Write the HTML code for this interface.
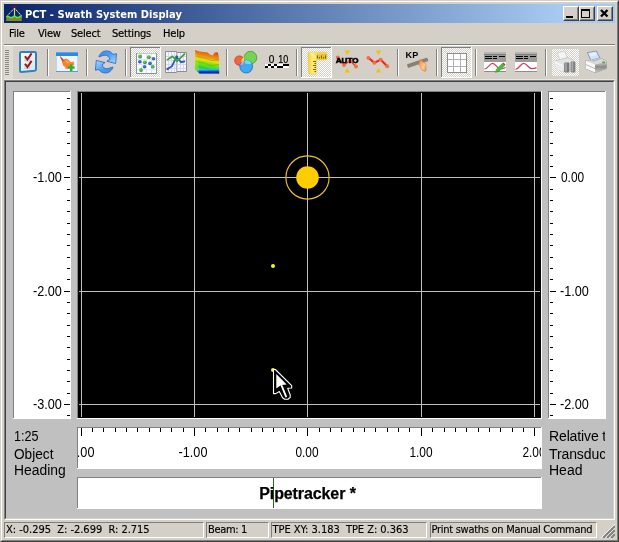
<!DOCTYPE html>
<html>
<head>
<meta charset="utf-8">
<title>PCT - Swath System Display</title>
<style>
html,body{margin:0;padding:0;}
body{width:619px;height:542px;overflow:hidden;background:#d4d0c8;position:relative;font-family:"Liberation Sans",sans-serif;font-size:11px;color:#000;}
#win *{position:absolute;box-sizing:border-box;}
#win svg *{position:static;}
#win{position:absolute;left:0;top:0;width:619px;height:542px;background:#d4d0c8;overflow:hidden;will-change:transform;}
.frame-o{left:0;top:0;width:619px;height:542px;border:1px solid;border-color:#d4d0c8 #404040 #404040 #d4d0c8;}
.frame-i{left:1px;top:1px;width:617px;height:540px;border:1px solid;border-color:#fff #808080 #808080 #fff;}
#title{left:4px;top:4px;width:611px;height:19px;background:linear-gradient(to right,#0a246a 0%,#a6caf0 91%,#a6caf0 100%);}
#title .cap{left:21px;top:4px;color:#fff;font-weight:bold;font-size:11px;line-height:14px;white-space:nowrap;letter-spacing:0.04px;font-family:"DejaVu Sans Condensed","Liberation Sans",sans-serif;}
.tbtn{top:2px;width:16px;height:15px;background:#d4d0c8;border:1px solid;border-color:#fff #404040 #404040 #fff;}
.tbtn:before{content:"";position:absolute;left:0;top:0;right:0;bottom:0;border:1px solid;border-color:#d4d0c8 #808080 #808080 #d4d0c8;}
#menu{left:4px;top:23px;width:611px;height:20px;}
#menu span{top:4px;font-size:11px;line-height:13px;white-space:nowrap;font-family:"DejaVu Sans Condensed","Liberation Sans",sans-serif;letter-spacing:-0.2px;-webkit-text-stroke:0.2px #000;}
#tb{left:4px;top:44px;width:611px;height:37px;}
.sep{top:5px;width:2px;height:26px;border-left:1px solid #808080;border-right:1px solid #fff;}
#client{left:4px;top:80px;width:611px;height:440px;border:1px solid;border-color:#808080 #fff #fff #808080;background:#c0c0c0;}
#client .in{left:0;top:0;width:609px;height:438px;border:1px solid;border-color:#404040 #d4d0c8 #d4d0c8 #404040;}
.lbl{font-size:14px;line-height:16px;white-space:nowrap;transform-origin:0 50%;}
.num{font-size:14px;line-height:16px;white-space:nowrap;transform:scaleX(0.905);}
.sp{top:522px;height:16px;border:1px solid;border-color:#808080 #fff #fff #808080;font-size:11px;line-height:14px;padding-left:1px;white-space:nowrap;overflow:hidden;font-family:"DejaVu Sans Condensed","Liberation Sans",sans-serif;-webkit-text-stroke:0.15px #000;}
</style>
</head>
<body>
<div id="win">
<div class="frame-o"></div>
<div class="frame-i"></div>

<div id="title">
  <svg style="left:2px;top:1px" width="16" height="16" viewBox="0 0 16 16">
    <ellipse cx="8.5" cy="1.6" rx="3.3" ry="1.4" fill="#6a104e" opacity="0.85"/>
    <path d="M0.2 16 V12.6 L2.2 11.6 L4.5 12.8 L6.5 12.6 L8.5 11.2 L10.5 12.6 L12.5 12.8 L14 11.6 L15.8 11.8 V16 Z" fill="#86861c"/>
    <path d="M8.5 3.2 L0.5 11.4 M8.5 3.2 L15.6 10.9" fill="none" stroke="#f6f6c0" stroke-width="1" stroke-dasharray="1.5 0.7"/>
    <path d="M8.5 3.4 V11.4" stroke="#e4e43c" stroke-width="1.1"/>
    <path d="M0.3 12 L2.2 11.3 L4.5 12.6 L6.4 12.4 L8.5 10.8 L10.6 12.4 L12.5 12.6 L14 11.3 L15.7 11.6" fill="none" stroke="#4ce84c" stroke-width="1.5" stroke-linejoin="round"/>
  </svg>
  <div class="cap">PCT - Swath System Display</div>
  <div class="tbtn" style="left:559px"><svg width="14" height="13" style="left:0;top:0" shape-rendering="crispEdges"><rect x="2" y="9" width="7" height="2" fill="#000"/></svg></div>
  <div class="tbtn" style="left:575px"><svg width="14" height="13" style="left:0;top:0" shape-rendering="crispEdges"><rect x="1.5" y="2.5" width="8" height="8" fill="none" stroke="#000"/><rect x="1" y="2" width="9" height="2" fill="#000"/></svg></div>
  <div class="tbtn" style="left:593px"><svg width="14" height="13" style="left:0;top:0"><path d="M3 3 L9.5 9.5 M9.5 3 L3 9.5" stroke="#000" stroke-width="2.3"/></svg></div>
</div>

<div id="menu">
  <span style="left:5px">File</span>
  <span style="left:34px">View</span>
  <span style="left:67px">Select</span>
  <span style="left:108px">Settings</span>
  <span style="left:159px">Help</span>
</div>

<div id="tb">
<svg id="tbsvg" style="left:-4px;top:0" width="619" height="37" viewBox="0 44 619 37">
<defs>
  <pattern id="chk" x="0" y="0" width="2" height="2" patternUnits="userSpaceOnUse">
    <rect x="0" y="0" width="2" height="2" fill="#d4d0c8"/>
    <rect x="0" y="0" width="1" height="1" fill="#fff"/>
    <rect x="1" y="1" width="1" height="1" fill="#fff"/>
  </pattern>
  <linearGradient id="gBlue" x1="0" y1="0" x2="1" y2="1">
    <stop offset="0" stop-color="#b8dcff"/><stop offset="1" stop-color="#2f86e6"/>
  </linearGradient>
  <linearGradient id="gBlue2" x1="0" y1="0" x2="0" y2="1">
    <stop offset="0" stop-color="#2f86e6"/><stop offset="1" stop-color="#a8d4fc"/>
  </linearGradient>
  <linearGradient id="gPage" x1="0" y1="0" x2="1" y2="1">
    <stop offset="0" stop-color="#ffffff"/><stop offset="1" stop-color="#cfe6fb"/>
  </linearGradient>
  <linearGradient id="gTerr" x1="0.2" y1="0" x2="0" y2="1">
    <stop offset="0" stop-color="#c8580c"/>
    <stop offset="0.12" stop-color="#e87410"/>
    <stop offset="0.26" stop-color="#f09c10"/>
    <stop offset="0.36" stop-color="#e8e010"/>
    <stop offset="0.48" stop-color="#90e010"/>
    <stop offset="0.7" stop-color="#38dc20"/>
    <stop offset="0.85" stop-color="#28d850"/>
    <stop offset="1" stop-color="#20c8e0"/>
  </linearGradient>
  <linearGradient id="gTerrB" gradientUnits="userSpaceOnUse" x1="0" y1="66.5" x2="0" y2="73.6">
    <stop offset="0" stop-color="#20d0e0" stop-opacity="0"/>
    <stop offset="0.45" stop-color="#20c8e8" stop-opacity="0.9"/>
    <stop offset="0.72" stop-color="#1038e0"/>
    <stop offset="1" stop-color="#0808a8"/>
  </linearGradient>
  <linearGradient id="gRul" x1="0" y1="0" x2="1" y2="0">
    <stop offset="0" stop-color="#f6cc38"/><stop offset="0.25" stop-color="#fff078"/><stop offset="0.45" stop-color="#f8dc58"/><stop offset="1" stop-color="#f4cc38"/>
  </linearGradient>
  <linearGradient id="gHand" x1="0" y1="0" x2="1" y2="1">
    <stop offset="0" stop-color="#f07848"/><stop offset="0.6" stop-color="#ffd088"/><stop offset="1" stop-color="#f08850"/>
  </linearGradient>
  <linearGradient id="gPrn" x1="0" y1="0" x2="0" y2="1">
    <stop offset="0" stop-color="#e8e8e8"/><stop offset="0.5" stop-color="#888"/><stop offset="1" stop-color="#c8c8c8"/>
  </linearGradient>
  <linearGradient id="gRefA" x1="0" y1="0" x2="1" y2="1">
    <stop offset="0" stop-color="#3a8cec"/><stop offset="0.45" stop-color="#4a9cf2"/><stop offset="1" stop-color="#b4dcff"/>
  </linearGradient>
  <radialGradient id="gBallG" cx="0.4" cy="0.35" r="0.7">
    <stop offset="0" stop-color="#6ad05a"/><stop offset="0.6" stop-color="#3cae3c"/><stop offset="1" stop-color="#2a8a30"/>
  </radialGradient>
  <radialGradient id="gBallB" cx="0.4" cy="0.35" r="0.7">
    <stop offset="0" stop-color="#4a86e0"/><stop offset="0.6" stop-color="#2a60c0"/><stop offset="1" stop-color="#1c4a9a"/>
  </radialGradient>
</defs>
<g shape-rendering="crispEdges">
  <!-- top etched line -->
  <rect x="4" y="44" width="611" height="1" fill="#808080"/>
  <rect x="4" y="45" width="611" height="1" fill="#fff"/>
  <rect x="4" y="46" width="9" height="33" fill="#dedbd4"/>
  <rect x="4" y="79" width="611" height="1" fill="#e8e6e0"/>
  <!-- gripper -->
  <g fill="#8a8780">
    <rect x="5" y="50" width="4" height="1"/><rect x="5" y="52" width="4" height="1"/><rect x="5" y="54" width="4" height="1"/>
    <rect x="5" y="56" width="4" height="1"/><rect x="5" y="58" width="4" height="1"/><rect x="5" y="60" width="4" height="1"/>
    <rect x="5" y="62" width="4" height="1"/><rect x="5" y="64" width="4" height="1"/><rect x="5" y="66" width="4" height="1"/>
    <rect x="5" y="68" width="4" height="1"/><rect x="5" y="70" width="4" height="1"/><rect x="5" y="72" width="4" height="1"/>
    <rect x="5" y="74" width="4" height="1"/>
  </g>
  <!-- separators -->
  <g id="seps">
    <rect x="47" y="49" width="1" height="27" fill="#808080"/><rect x="48" y="49" width="1" height="27" fill="#fff"/>
    <rect x="86" y="49" width="1" height="27" fill="#808080"/><rect x="87" y="49" width="1" height="27" fill="#fff"/>
    <rect x="125" y="49" width="1" height="27" fill="#808080"/><rect x="126" y="49" width="1" height="27" fill="#fff"/>
    <rect x="226" y="49" width="1" height="27" fill="#808080"/><rect x="227" y="49" width="1" height="27" fill="#fff"/>
    <rect x="296" y="49" width="1" height="27" fill="#808080"/><rect x="297" y="49" width="1" height="27" fill="#fff"/>
    <rect x="397" y="49" width="1" height="27" fill="#808080"/><rect x="398" y="49" width="1" height="27" fill="#fff"/>
    <rect x="436" y="49" width="1" height="27" fill="#808080"/><rect x="437" y="49" width="1" height="27" fill="#fff"/>
    <rect x="475" y="49" width="1" height="27" fill="#808080"/><rect x="476" y="49" width="1" height="27" fill="#fff"/>
    <rect x="545" y="49" width="1" height="27" fill="#808080"/><rect x="546" y="49" width="1" height="27" fill="#fff"/>
  </g>
  <!-- pressed buttons -->
  <g id="pressed">
    <rect x="130" y="47" width="31" height="31" fill="#fff"/><rect x="130" y="47" width="30" height="30" fill="#808080"/><rect x="131" y="48" width="29" height="29" fill="url(#chk)"/>
    <rect x="301" y="47" width="31" height="31" fill="#fff"/><rect x="301" y="47" width="30" height="30" fill="#808080"/><rect x="302" y="48" width="29" height="29" fill="url(#chk)"/>
    <rect x="441" y="47" width="31" height="31" fill="#fff"/><rect x="441" y="47" width="30" height="30" fill="#808080"/><rect x="442" y="48" width="29" height="29" fill="url(#chk)"/>
    <rect x="552" y="49" width="27" height="27" fill="url(#chk)"/>
  </g>
</g>
<!-- 1: checklist -->
<g>
  <path d="M21.5 52 H34.5 Q36 52 36 53.5 V69.2 Q36 70.6 34.5 70.8 L21.5 72 Q20 72 20 70.5 V53.5 Q20 52 21.5 52 Z" fill="url(#gPage)" stroke="#2f80c6" stroke-width="2" stroke-linejoin="round"/>
  <rect x="25" y="57" width="4.5" height="4" fill="#eee" stroke="#bdbdbd" stroke-width="0.8"/>
  <rect x="25" y="64.5" width="4.5" height="4" fill="#eee" stroke="#bdbdbd" stroke-width="0.8"/>
  <path d="M25 56.2 L27.4 59.6 L31.6 53.4" fill="none" stroke="#a81212" stroke-width="1.9"/>
  <path d="M25 63.7 L27.4 67.1 L31.6 60.9" fill="none" stroke="#a81212" stroke-width="1.9"/>
</g>
<!-- 2: window + arrow + plus -->
<g>
  <rect x="56" y="52" width="22" height="20" fill="#f3f3ff"/>
  <rect x="56" y="52" width="22" height="4" fill="#2a8be6"/>
  <rect x="56" y="52" width="22" height="1" fill="#58a6ee"/>
  <rect x="56" y="71" width="22" height="1" fill="#4aa0f0"/>
  <rect x="56" y="56" width="1" height="15" fill="#b8d8fa"/>
  <rect x="77" y="56" width="1" height="15" fill="#b8d8fa"/>
  <path d="M60 56.3 L63.6 59.8 L65.6 59 L67.9 59.6 L70.6 62.6 L73.6 61.9 L73.9 64.8 L71 66 L69.9 66.8 L67.9 68.6 L65.4 68.4 L65.9 66.7 L63.8 66 L62.9 63.9 L62.2 60.8 Z" fill="#f58428" stroke="#ea6c18" stroke-width="0.5" stroke-linejoin="round"/>
  <path d="M60 56.3 L63.6 59.8 L63 62.6 L62.2 60.8 Z" fill="#b04c20"/>
  <path d="M65 60.4 L67.6 60.6 L69.6 63 L67 63.6 Z" fill="#fbb060" opacity="0.8"/>
  <path d="M71.2 64.2 V71 M67.8 67.6 H74.6" stroke="#30b030" stroke-width="2.5" fill="none"/>
</g>
<!-- 3: refresh -->
<g stroke="#2262c8" stroke-width="0.8" stroke-linejoin="round">
  <path d="M98.9 56.9 C99.8 53.4 103 50.9 106.6 50.9 C109.4 50.9 111.6 52.2 113 54.4 L116.5 53.7 L115.6 63.5 L106.8 61.3 L109.8 59.1 C108.9 56.6 107.4 55.2 105.5 55.2 C103.3 55.2 101.3 56.2 98.9 56.9 Z" fill="url(#gRefA)"/>
  <path d="M98.9 56.9 C99.8 53.4 103 50.9 106.6 50.9 C109.4 50.9 111.6 52.2 113 54.4 L116.5 53.7 L115.6 63.5 L106.8 61.3 L109.8 59.1 C108.9 56.6 107.4 55.2 105.5 55.2 C103.3 55.2 101.3 56.2 98.9 56.9 Z" fill="url(#gRefA)" transform="rotate(180 105.95 61.95)"/>
</g>
<!-- 4: scatter (pressed) -->
<g>
  <rect x="136.5" y="53.5" width="20" height="20" fill="#fdfdff" stroke="#8e929c" stroke-width="1"/>
  <rect x="137" y="53" width="19" height="1" fill="#c4c8d2"/>
  <path d="M141.5 54 V73 M146.5 54 V73 M151.5 54 V73 M137 59.5 H156 M137 64.5 H156 M137 69.5 H156" stroke="#e4e4f2" stroke-width="1" fill="none"/>
  <g fill="url(#gBallG)">
    <circle cx="140" cy="56.5" r="1.9"/><circle cx="148.8" cy="57.2" r="1.9"/><circle cx="144.8" cy="62.3" r="1.9"/><circle cx="152.7" cy="66.7" r="1.9"/><circle cx="141" cy="70" r="1.9"/>
  </g>
  <g fill="url(#gBallB)">
    <circle cx="153.5" cy="58.8" r="1.8"/><circle cx="139.8" cy="61.7" r="1.8"/><circle cx="150" cy="63.4" r="1.8"/><circle cx="144.5" cy="66.7" r="1.8"/>
  </g>
</g>
<!-- 5: chart -->
<g>
  <path d="M165.5 51.5 H176.5 V52.5 H186.5 V71.5 H176.5 V72.5 H165.5 Z" fill="#f5f5fe" stroke="#8c8c98" stroke-width="1"/>
  <path d="M168.5 52 V72 M171.5 52 V72 M174.5 52 V72 M177.5 53 V71 M180.5 53 V71 M183.5 53 V71 M166 56.5 H186 M166 60.5 H186 M166 64.5 H186 M166 68.5 H186" stroke="#d4d4ea" stroke-width="1" fill="none"/>
  <path d="M176.5 53 V72" stroke="#b4b4c8" stroke-width="1" fill="none"/>
  <path d="M167.5 69 L172 66.2 L174.5 61 L176.6 57 L181 62.2 L185 61.4" fill="none" stroke="#2a58b4" stroke-width="1.7"/>
  <circle cx="176.7" cy="57" r="1.4" fill="#2a58b4"/><circle cx="167.6" cy="69" r="1.2" fill="#2a58b4"/>
  <path d="M167 60 L172.5 56.4 L177 61.2 L185 53.6" fill="none" stroke="#36a636" stroke-width="1.7"/>
</g>
<!-- 6: terrain -->
<g>
  <path d="M195 50 L199.5 51.4 L207.5 52.6 L210 54.6 L212.6 55.4 L214.8 52.6 L217.8 52.2 L218.8 56.5 L219.2 73.6 L199.4 73.6 L195.2 69.4 Z" fill="url(#gTerr)"/>
  <path d="M197.5 66 L219.2 68.5 L219.2 73.6 L199.4 73.6 L197.5 71.5 Z" fill="url(#gTerrB)"/>
  <path d="M195 50 L195.2 69.4 L199.4 73.6 L198.6 66 L197 56 Z" fill="#f4e040" opacity="0.3"/>
  <path d="M196 56.4 L205 58.4 L212 60.8 L219 59.4 M196 61.4 L204 63 L211 65.6 L219 64.4 M198 66.6 L206 68.4 L213 70.6 L219 69.8" stroke="#187818" stroke-opacity="0.3" stroke-width="0.8" fill="none"/>
</g>
<!-- 7: venn -->
<g stroke-width="0.8">
  <circle cx="239.4" cy="60.6" r="4.7" fill="#f2643e" stroke="#c4381e"/>
  <circle cx="250.5" cy="57.6" r="6.3" fill="#74d254" stroke="#3e9e2e"/>
  <circle cx="246.2" cy="66.6" r="6.4" fill="#42a8f2" stroke="#1e6cc0"/>
  <path d="M244.2 57 Q244.6 59.6 244.2 61.8 L241.6 62 Q241 58.6 244.2 57 Z" fill="#f4e020" stroke="none"/>
  <path d="M240.2 65 Q241.2 61.6 244 60.6 Q244.2 63 242.6 64.8 Z" fill="#b8a8f0" stroke="none"/>
  <path d="M244.6 60.4 Q248.6 59 251.8 63.4 Q248.4 64.6 245.2 63.6 Z" fill="#6ee0e0" stroke="none"/>
</g>
<!-- 8: 0 10 scale -->
<g>
  <text x="268.7" y="63" font-family="'Liberation Sans',sans-serif" font-size="11px" fill="#000" stroke="#000" stroke-width="0.2" textLength="5.6" lengthAdjust="spacingAndGlyphs">0</text>
  <text x="278.2" y="63" font-family="'Liberation Sans',sans-serif" font-size="11px" fill="#000" stroke="#000" stroke-width="0.2" textLength="10" lengthAdjust="spacingAndGlyphs">10</text>
  <g shape-rendering="crispEdges">
    <rect x="265" y="64" width="24" height="4" fill="#fff"/>
    <rect x="268" y="64" width="3" height="2" fill="#000"/><rect x="274" y="64" width="3" height="2" fill="#000"/><rect x="283" y="64" width="6" height="2" fill="#000"/>
    <rect x="265" y="66" width="3" height="2" fill="#000"/><rect x="271" y="66" width="3" height="2" fill="#000"/><rect x="277" y="66" width="6" height="2" fill="#000"/>
  </g>
</g>
<!-- 9: ruler (pressed) -->
<g>
  <path d="M308 52.6 Q308 52.2 308.6 52.2 H325.4 Q327.3 52.6 327.2 54.5 V58 Q327 59.8 325.4 59.8 H316.4 V72.6 Q316.2 74.2 314.8 74.2 H310 Q308.6 74 308.5 72.4 Z" fill="url(#gRul)" stroke="#e8c030" stroke-width="0.4"/>
  <path d="M308.3 52.4 L316.4 59.8 V57.4 L311 52.4 Z" fill="#fff8b0" opacity="0.55"/>
  <rect x="316.4" y="54.2" width="10.4" height="5" fill="#d8a820" opacity="0.45"/>
  <path d="M317.5 55.5 V58.5 M319.5 57 V58.5 M321.5 55.5 V58.5 M323.5 57 V58.5 M325.5 55.5 V58.5" stroke="#6a5000" stroke-width="1" fill="none" opacity="0.85"/>
  <path d="M313 61.5 H316 M314.5 63.5 H316 M313 65.5 H316 M314.5 67.5 H316 M313 69.5 H316 M314.5 71.5 H316" stroke="#6a5000" stroke-width="1" fill="none" opacity="0.85"/>
</g>
<!-- 10: AUTO -->
<g>
  <path d="M337.8 57.4 L344 65 L350 60.6 L356 66.4" stroke="#e03030" stroke-width="1.4" fill="none"/>
  <circle cx="337.8" cy="57.4" r="1.9" fill="#f86c40"/><circle cx="344" cy="65" r="1.9" fill="#f86c40"/><circle cx="350" cy="60.6" r="1.9" fill="#f86c40"/><circle cx="356" cy="66.4" r="2" fill="#f86c40"/>
  <path d="M344.5 50.6 H350.1 L347.3 55 Z" fill="#ecc410"/>
  <path d="M344.5 72.6 H350.1 L347.3 68.2 Z" fill="#ecc410"/>
  <text x="335.8" y="63.4" font-family="'Liberation Sans',sans-serif" font-size="7.4px" font-weight="bold" fill="#000" stroke="#000" stroke-width="0.55" textLength="22.6" lengthAdjust="spacingAndGlyphs">AUTO</text>
</g>
<!-- 11: zigzag -->
<g>
  <path d="M368.4 57.8 L374.4 62.8 L380.6 59.6 L387.2 66.2" stroke="#f8a888" stroke-width="3.4" stroke-opacity="0.5" fill="none" stroke-linecap="round"/>
  <path d="M368.4 57.8 L374.4 62.8 L380.6 59.6 L387.2 66.2" stroke="#e02828" stroke-width="2" fill="none"/>
  <circle cx="368.4" cy="57.8" r="1.9" fill="#f86c40"/><circle cx="374.4" cy="62.8" r="1.9" fill="#f86c40"/><circle cx="380.6" cy="59.6" r="1.9" fill="#f86c40"/><circle cx="387.2" cy="66.2" r="2" fill="#f86c40"/>
  <path d="M375.7 50.6 H381.3 L378.5 55 Z" fill="#ecc410"/>
  <path d="M375.7 72.6 H381.3 L378.5 68.2 Z" fill="#ecc410"/>
</g>
<!-- 12: KP -->
<g>
  <text x="405.6" y="57.6" font-family="'Liberation Sans',sans-serif" font-size="9px" font-weight="bold" fill="#000" textLength="12.6" lengthAdjust="spacingAndGlyphs">KP</text>
  <path d="M407.4 64.6 L427 58 L428 60.8 L408.2 67.6 Z" fill="#8a8272" stroke="#6e6658" stroke-width="0.5"/>
  <path d="M419.6 60 L421.4 59.6 L422.4 61.6 L425.6 63.6 L426.2 70.4 L424.6 71.4 L421.8 69.6 L420.4 66.6 L418.8 64.4 Z" fill="url(#gHand)" stroke="#e86840" stroke-width="0.5"/>
</g>
<!-- 13: grid (pressed) -->
<g shape-rendering="crispEdges">
  <rect x="447" y="53" width="20" height="20" fill="#8c8c8c"/>
  <rect x="448" y="54" width="18" height="18" fill="#b0b0b0"/>
  <rect x="448" y="54" width="5" height="5" fill="#fff"/><rect x="454" y="54" width="6" height="5" fill="#fff"/><rect x="461" y="54" width="5" height="5" fill="#fff"/>
  <rect x="448" y="60" width="5" height="6" fill="#fff"/><rect x="454" y="60" width="6" height="6" fill="#fff"/><rect x="461" y="60" width="5" height="6" fill="#fff"/>
  <rect x="448" y="67" width="5" height="5" fill="#fff"/><rect x="454" y="67" width="6" height="5" fill="#fff"/><rect x="461" y="67" width="5" height="5" fill="#fff"/>
</g>
<!-- 14: chart + pencil -->
<g>
  <g shape-rendering="crispEdges">
    <rect x="484" y="52" width="22" height="20" fill="#fff"/>
    <rect x="484" y="52" width="22" height="10" fill="#9a9a9a"/>
    <rect x="484" y="52" width="22" height="2" fill="#b4b4b4"/>
    <rect x="484" y="54" width="22" height="1" fill="#7c7c7c"/>
    <rect x="484" y="71" width="22" height="1" fill="#8c8c8c"/>
    <rect x="485" y="56" width="7" height="1" fill="#000"/><rect x="493" y="56" width="4" height="1" fill="#000"/><rect x="499" y="56" width="6" height="1" fill="#000"/>
    <rect x="485" y="58" width="7" height="1" fill="#000"/><rect x="493" y="58" width="4" height="1" fill="#000"/>
  </g>
  <path d="M484.4 69 C488 69 489.4 63.4 492.6 63.4 C495.8 63.4 497 69 500.4 69 C502.4 69 504 68.6 505.6 67.6" stroke="#d04060" stroke-width="1.2" fill="none"/>
  <path d="M495.4 72.4 L496.6 69 L502.2 63.6 L504.6 65.8 L498.8 71.4 Z" fill="#44c038" stroke="#2a9020" stroke-width="0.5"/>
  <path d="M502.2 63.6 L503.4 62.6 L505.6 64.6 L504.6 65.8 Z" fill="#a05038"/>
</g>
<!-- 15: chart -->
<g>
  <g shape-rendering="crispEdges">
    <rect x="515" y="52" width="22" height="20" fill="#fff"/>
    <rect x="515" y="52" width="22" height="10" fill="#9a9a9a"/>
    <rect x="515" y="52" width="22" height="2" fill="#b4b4b4"/>
    <rect x="515" y="54" width="22" height="1" fill="#7c7c7c"/>
    <rect x="515" y="71" width="22" height="1" fill="#8c8c8c"/>
    <rect x="516" y="56" width="7" height="1" fill="#000"/><rect x="524" y="56" width="4" height="1" fill="#000"/><rect x="530" y="56" width="6" height="1" fill="#000"/>
    <rect x="516" y="58" width="7" height="1" fill="#000"/><rect x="524" y="58" width="4" height="1" fill="#000"/>
  </g>
  <path d="M515.4 69.4 C519 69.4 520.4 63.4 523.6 63.4 C526.8 63.4 528.6 68.6 531.6 68.6 C533.4 68.6 535 68.4 536.6 67.6" stroke="#d04060" stroke-width="1.3" fill="none"/>
</g>
<!-- 16: printer disabled -->
<g>
  <path d="M557 53 L564.6 51 L567.4 57.6 L560 60 Z" fill="#f4f4f4" stroke="#c4c4c4" stroke-width="0.7"/>
  <path d="M554.4 61 L560 59.6 L567.6 57.6 L573.4 60.4 L573.4 68.4 L562.6 71.6 L554.4 67.4 Z" fill="#e4e4e4" stroke="#c0c0c0" stroke-width="0.7"/>
  <path d="M554.4 61 L562.6 64.8 L562.6 71.6 L554.4 67.4 Z" fill="#f6f6f6"/>
  <path d="M555 64 L562 67.4 M555 66 L562 69.4" stroke="#d0d0d0" stroke-width="0.6" fill="none"/>
  <rect x="564.2" y="62.4" width="5.2" height="10" rx="1" fill="#7a7a7a"/>
  <rect x="570.6" y="61.4" width="4.8" height="11" rx="1" fill="#828282"/>
  <rect x="565.2" y="63" width="1.6" height="8.6" fill="#a8a8a8"/>
  <rect x="571.6" y="62" width="1.5" height="9.6" fill="#acacac"/>
</g>
<!-- 17: printer -->
<g>
  <path d="M587.4 52.6 L596.4 51 L599.8 58 L591 60.6 Z" fill="#cfe4fa" stroke="#7e8a98" stroke-width="0.8"/>
  <path d="M589 53.4 L595.6 52.2 L597 55 L590.4 56.6 Z" fill="#e4f0fe"/>
  <path d="M585.6 60.6 L591 60.6 L599.8 58 L606.4 61 L606.4 68.4 L595 72.6 L585.6 68.4 Z" fill="#e2e2e2" stroke="#8e8e8e" stroke-width="0.8"/>
  <path d="M585.6 60.6 L595 64.6 L595 72.6 L585.6 68.4 Z" fill="#f8f8f8"/>
  <path d="M595 64.6 L606.4 61 L606.4 68.4 L595 72.6 Z" fill="url(#gPrn)"/>
  <path d="M591 60.6 L599.8 58 L606.4 61 L595 64.6 L585.6 60.6 Z" fill="#dadada"/>
  <path d="M591 60.6 L599.8 58 L602 59 L593 62 Z" fill="#c0c0c0"/>
  <path d="M586 64.6 L595 68.6 L606 65" stroke="#9a9a9a" stroke-width="0.7" fill="none"/>
  <ellipse cx="603.6" cy="62.4" rx="1.6" ry="1.2" fill="#58b048"/>
</g>

</svg>

</div>

<div id="client"><div class="in"></div></div>

<svg id="gfx" style="left:0;top:0" width="619" height="542" viewBox="0 0 619 542" shape-rendering="crispEdges">
<rect x="13" y="91" width="58" height="328" fill="#fff"/>
<rect x="13" y="91" width="57" height="1" fill="#808080"/>
<rect x="13" y="91" width="1" height="327" fill="#808080"/>
<rect x="14" y="92" width="56" height="326" fill="#fff"/>
<rect x="77" y="91" width="465" height="328" fill="#fff"/>
<rect x="77" y="91" width="464" height="1" fill="#808080"/>
<rect x="77" y="91" width="1" height="327" fill="#808080"/>
<rect x="78" y="92" width="463" height="326" fill="#000"/>
<rect x="548" y="91" width="58" height="328" fill="#fff"/>
<rect x="548" y="91" width="57" height="1" fill="#808080"/>
<rect x="548" y="91" width="1" height="327" fill="#808080"/>
<rect x="549" y="92" width="56" height="326" fill="#fff"/>
<rect x="77" y="427" width="465" height="42" fill="#fff"/>
<rect x="77" y="427" width="464" height="1" fill="#808080"/>
<rect x="77" y="427" width="1" height="41" fill="#808080"/>
<rect x="78" y="428" width="463" height="40" fill="#fff"/>
<rect x="77" y="477" width="465" height="32" fill="#fff"/>
<rect x="77" y="477" width="464" height="1" fill="#808080"/>
<rect x="77" y="477" width="1" height="31" fill="#808080"/>
<rect x="78" y="478" width="463" height="30" fill="#fff"/>
<rect x="81" y="93" width="1" height="324" fill="#c0c0c0"/>
<rect x="194" y="93" width="1" height="324" fill="#c0c0c0"/>
<rect x="307" y="93" width="1" height="324" fill="#c0c0c0"/>
<rect x="421" y="93" width="1" height="324" fill="#c0c0c0"/>
<rect x="534" y="93" width="1" height="324" fill="#c0c0c0"/>
<rect x="79" y="177" width="461" height="1" fill="#c0c0c0"/>
<rect x="79" y="291" width="461" height="1" fill="#c0c0c0"/>
<rect x="79" y="404" width="461" height="1" fill="#c0c0c0"/>
<rect x="67" y="98" width="3" height="1" fill="#000"/>
<rect x="550" y="98" width="3" height="1" fill="#000"/>
<rect x="67" y="109" width="3" height="1" fill="#000"/>
<rect x="550" y="109" width="3" height="1" fill="#000"/>
<rect x="67" y="121" width="3" height="1" fill="#000"/>
<rect x="550" y="121" width="3" height="1" fill="#000"/>
<rect x="67" y="132" width="3" height="1" fill="#000"/>
<rect x="550" y="132" width="3" height="1" fill="#000"/>
<rect x="67" y="143" width="3" height="1" fill="#000"/>
<rect x="550" y="143" width="3" height="1" fill="#000"/>
<rect x="67" y="155" width="3" height="1" fill="#000"/>
<rect x="550" y="155" width="3" height="1" fill="#000"/>
<rect x="67" y="166" width="3" height="1" fill="#000"/>
<rect x="550" y="166" width="3" height="1" fill="#000"/>
<rect x="64" y="177" width="6" height="1" fill="#000"/>
<rect x="550" y="177" width="6" height="1" fill="#000"/>
<rect x="67" y="189" width="3" height="1" fill="#000"/>
<rect x="550" y="189" width="3" height="1" fill="#000"/>
<rect x="67" y="200" width="3" height="1" fill="#000"/>
<rect x="550" y="200" width="3" height="1" fill="#000"/>
<rect x="67" y="211" width="3" height="1" fill="#000"/>
<rect x="550" y="211" width="3" height="1" fill="#000"/>
<rect x="67" y="223" width="3" height="1" fill="#000"/>
<rect x="550" y="223" width="3" height="1" fill="#000"/>
<rect x="67" y="234" width="3" height="1" fill="#000"/>
<rect x="550" y="234" width="3" height="1" fill="#000"/>
<rect x="67" y="245" width="3" height="1" fill="#000"/>
<rect x="550" y="245" width="3" height="1" fill="#000"/>
<rect x="67" y="257" width="3" height="1" fill="#000"/>
<rect x="550" y="257" width="3" height="1" fill="#000"/>
<rect x="67" y="268" width="3" height="1" fill="#000"/>
<rect x="550" y="268" width="3" height="1" fill="#000"/>
<rect x="67" y="279" width="3" height="1" fill="#000"/>
<rect x="550" y="279" width="3" height="1" fill="#000"/>
<rect x="64" y="291" width="6" height="1" fill="#000"/>
<rect x="550" y="291" width="6" height="1" fill="#000"/>
<rect x="67" y="302" width="3" height="1" fill="#000"/>
<rect x="550" y="302" width="3" height="1" fill="#000"/>
<rect x="67" y="313" width="3" height="1" fill="#000"/>
<rect x="550" y="313" width="3" height="1" fill="#000"/>
<rect x="67" y="325" width="3" height="1" fill="#000"/>
<rect x="550" y="325" width="3" height="1" fill="#000"/>
<rect x="67" y="336" width="3" height="1" fill="#000"/>
<rect x="550" y="336" width="3" height="1" fill="#000"/>
<rect x="67" y="347" width="3" height="1" fill="#000"/>
<rect x="550" y="347" width="3" height="1" fill="#000"/>
<rect x="67" y="359" width="3" height="1" fill="#000"/>
<rect x="550" y="359" width="3" height="1" fill="#000"/>
<rect x="67" y="370" width="3" height="1" fill="#000"/>
<rect x="550" y="370" width="3" height="1" fill="#000"/>
<rect x="67" y="381" width="3" height="1" fill="#000"/>
<rect x="550" y="381" width="3" height="1" fill="#000"/>
<rect x="67" y="393" width="3" height="1" fill="#000"/>
<rect x="550" y="393" width="3" height="1" fill="#000"/>
<rect x="64" y="404" width="6" height="1" fill="#000"/>
<rect x="550" y="404" width="6" height="1" fill="#000"/>
<rect x="67" y="415" width="3" height="1" fill="#000"/>
<rect x="550" y="415" width="3" height="1" fill="#000"/>
<rect x="81" y="428" width="1" height="8" fill="#000"/>
<rect x="92" y="428" width="1" height="4" fill="#000"/>
<rect x="103" y="428" width="1" height="4" fill="#000"/>
<rect x="115" y="428" width="1" height="4" fill="#000"/>
<rect x="126" y="428" width="1" height="4" fill="#000"/>
<rect x="137" y="428" width="1" height="4" fill="#000"/>
<rect x="149" y="428" width="1" height="4" fill="#000"/>
<rect x="160" y="428" width="1" height="4" fill="#000"/>
<rect x="171" y="428" width="1" height="4" fill="#000"/>
<rect x="183" y="428" width="1" height="4" fill="#000"/>
<rect x="194" y="428" width="1" height="8" fill="#000"/>
<rect x="205" y="428" width="1" height="4" fill="#000"/>
<rect x="217" y="428" width="1" height="4" fill="#000"/>
<rect x="228" y="428" width="1" height="4" fill="#000"/>
<rect x="239" y="428" width="1" height="4" fill="#000"/>
<rect x="251" y="428" width="1" height="4" fill="#000"/>
<rect x="262" y="428" width="1" height="4" fill="#000"/>
<rect x="273" y="428" width="1" height="4" fill="#000"/>
<rect x="285" y="428" width="1" height="4" fill="#000"/>
<rect x="296" y="428" width="1" height="4" fill="#000"/>
<rect x="307" y="428" width="1" height="8" fill="#000"/>
<rect x="319" y="428" width="1" height="4" fill="#000"/>
<rect x="330" y="428" width="1" height="4" fill="#000"/>
<rect x="341" y="428" width="1" height="4" fill="#000"/>
<rect x="353" y="428" width="1" height="4" fill="#000"/>
<rect x="364" y="428" width="1" height="4" fill="#000"/>
<rect x="375" y="428" width="1" height="4" fill="#000"/>
<rect x="387" y="428" width="1" height="4" fill="#000"/>
<rect x="398" y="428" width="1" height="4" fill="#000"/>
<rect x="409" y="428" width="1" height="4" fill="#000"/>
<rect x="421" y="428" width="1" height="8" fill="#000"/>
<rect x="432" y="428" width="1" height="4" fill="#000"/>
<rect x="444" y="428" width="1" height="4" fill="#000"/>
<rect x="455" y="428" width="1" height="4" fill="#000"/>
<rect x="466" y="428" width="1" height="4" fill="#000"/>
<rect x="478" y="428" width="1" height="4" fill="#000"/>
<rect x="489" y="428" width="1" height="4" fill="#000"/>
<rect x="500" y="428" width="1" height="4" fill="#000"/>
<rect x="512" y="428" width="1" height="4" fill="#000"/>
<rect x="523" y="428" width="1" height="4" fill="#000"/>
<rect x="534" y="428" width="1" height="8" fill="#000"/>
</svg>
<svg id="gfx2" style="left:0;top:0" width="619" height="542" viewBox="0 0 619 542">
<circle cx="307.5" cy="177.5" r="21.6" fill="none" stroke="#ecc030" stroke-width="1.15"/>
<circle cx="307.5" cy="177.5" r="11.3" fill="#ffcc00"/>
<circle cx="273" cy="266" r="2" fill="#f6f428"/>
<circle cx="273" cy="370" r="2" fill="#f6f428"/>
<g><path d="M273.5 369.5 L275.4 369.5 L291.7 385.7 L291.7 388 L287.7 388.3 L290.2 395 L290.2 397.4 L288 399.2 L284.6 399.2 L282.6 397.8 L279.3 391.5 L275.8 393.6 L273.5 393.6 Z" fill="#000" stroke="#fff" stroke-width="1.1" stroke-linejoin="round"/><path d="M276.3 374 L286.6 384.4 L281.8 384.9 L279.4 386.2 L276.3 388.6 Z" fill="#fff"/><path d="M281.8 386 L286 396.4" stroke="#fff" stroke-width="1.9" stroke-linecap="round" fill="none"/></g>
<rect x="273" y="478" width="1" height="30" fill="#1e6a1e"/>
</svg>
<div class="num" style="right:557px;top:169px;transform:scaleX(0.905);transform-origin:100% 50%">-1.00</div>
<div class="num" style="right:557px;top:283px;transform:scaleX(0.905);transform-origin:100% 50%">-2.00</div>
<div class="num" style="right:557px;top:396px;transform:scaleX(0.905);transform-origin:100% 50%">-3.00</div>
<div class="num" style="left:560.5px;top:169px;transform:scaleX(0.85);transform-origin:0 50%">0.00</div>
<div class="num" style="left:560px;top:283px;transform:scaleX(0.905);transform-origin:0 50%">-1.00</div>
<div class="num" style="left:560px;top:396px;transform:scaleX(0.905);transform-origin:0 50%">-2.00</div>
<div style="left:78px;top:428px;width:463px;height:40px;overflow:hidden"><div class="num" style="left:-28.0px;width:60px;text-align:center;top:16px;transform:scaleX(0.905);transform-origin:50% 50%">-2.00</div><div class="num" style="left:85.0px;width:60px;text-align:center;top:16px;transform:scaleX(0.905);transform-origin:50% 50%">-1.00</div><div class="num" style="left:198.7px;width:60px;text-align:center;top:16px;transform:scaleX(0.85);transform-origin:50% 50%">0.00</div><div class="num" style="left:312.7px;width:60px;text-align:center;top:16px;transform:scaleX(0.85);transform-origin:50% 50%">1.00</div><div class="num" style="left:425.7px;width:60px;text-align:center;top:16px;transform:scaleX(0.85);transform-origin:50% 50%">2.00</div></div>

<div class="lbl" style="left:14px;top:428px;transform:scaleX(0.9)">1:25</div>
<div class="lbl" style="left:14px;top:446px;transform:scaleX(0.975)">Object</div>
<div class="lbl" style="left:14px;top:462px;transform:scaleX(0.99)">Heading</div>
<div style="left:548px;top:427px;width:57.4px;height:60px;overflow:hidden">
<div class="lbl" style="left:1px;top:1px;letter-spacing:-0.13px">Relative to</div>
<div class="lbl" style="left:1px;top:19px;letter-spacing:-0.1px">Transducer</div>
<div class="lbl" style="left:1px;top:35px">Head</div>
</div>
<div class="lbl" style="left:78px;top:485px;width:463px;text-align:center;font-weight:bold;font-size:16px;line-height:18px;padding-right:4px;letter-spacing:-0.1px;-webkit-text-stroke:0.25px #000">Pipetracker *</div>

<div class="sp" style="left:4px;width:200px;letter-spacing:-0.02px">X: -0.295&nbsp; Z: -2.699&nbsp; R: 2.715</div>
<div class="sp" style="left:206px;width:63px;letter-spacing:-0.35px">Beam: 1</div>
<div class="sp" style="left:271px;width:156px;letter-spacing:-0.03px;padding-left:0.5px">TPE XY: 3.183&nbsp; TPE Z: 0.363</div>
<div class="sp" style="left:430px;width:167px;letter-spacing:-0.28px;padding-left:0.5px">Print swaths on Manual Command</div>
<svg style="left:600px;top:523px" width="15" height="15" viewBox="600 523 15 15">
  <path d="M601.5 538 L615 524.5 M605.5 538 L615 528.5 M609.5 538 L615 532.5" stroke="#fff" stroke-width="1.2" fill="none"/>
  <path d="M603 538 L615 526 M607 538 L615 530 M611 538 L615 534" stroke="#808080" stroke-width="2" fill="none"/>
</svg>
</div>
</body>
</html>
